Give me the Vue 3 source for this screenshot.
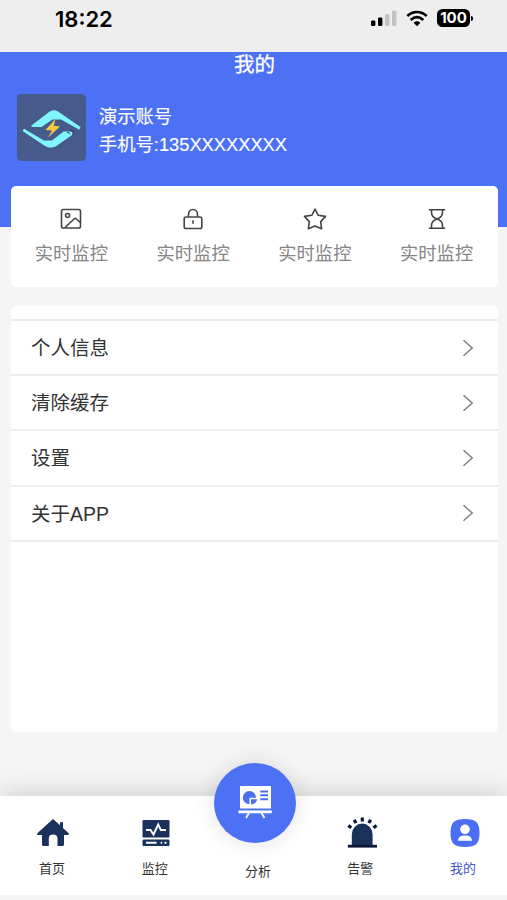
<script setup>
const shortcuts = ['image', 'lock', 'star', 'hourglass']
const rows = ['个人信息', '清除缓存', '设置', '关于APP']
const tabs = [
  { id: 'home', label: '首页' },
  { id: 'monitor', label: '监控' },
  { id: 'analysis', label: '分析' },
  { id: 'alarm', label: '告警' },
  { id: 'mine', label: '我的' },
]
</script>

<template>
  <div class="screen">
    <div class="status">
      <span class="time">18:22</span>
      <svg class="signal" width="26" height="17" viewBox="0 0 26 17">
        <rect x="0" y="10.5" width="4.4" height="5.5" rx="1.3" fill="#000" />
        <rect x="7" y="7.5" width="4.4" height="8.5" rx="1.3" fill="#000" />
        <rect x="14" y="4" width="4.4" height="12" rx="1.3" fill="#c3c3c3" />
        <rect x="21" y="0.5" width="4.4" height="15.5" rx="1.3" fill="#c3c3c3" />
      </svg>
      <svg class="wifi" width="22" height="17" viewBox="0 0 22 17">
        <path d="M1.300 6C7 .6 15 .6 20.700 6M4.700 9.900C8.600 6.500 13.400 6.500 17.300 9.900" fill="none" stroke="#000" stroke-width="2.600" />
        <path d="M11 16.200L7.600 12.700Q11 10 14.400 12.700Z" fill="#000" />
      </svg>
      <div class="battery">100</div>
      <i class="battery-tip"></i>
    </div>

    <header class="header">
      <h1 class="title">我的</h1>
      <div class="profile">
        <svg class="avatar" width="69" height="67" viewBox="0 0 69 67">
          <rect width="69" height="67" rx="4.500" fill="#465a8c" />
          <path d="M14.500 31.500L32 18Q36 15 41 17.500L63.500 33L62.300 35.800L44 25.500H35.500L24.500 33H16Q13.500 32.500 14.500 31.500Z" fill="#80f5fb" />
          <path d="M5.500 37L7 34.700L27 46.500H35L46.500 37.500H53.500Q57 39 54.500 41.500L38.500 52.500Q33 55 28 52Z" fill="#80f5fb" />
          <path d="M38.500 25L28.500 36L35 36.400L31 43.500L43 32.500L36.800 31.700Z" fill="#f6ca3c" />
          <path d="M50 38L54 40M52.500 36.500L57 37.500M55.500 41L57 39" stroke="#263f65" stroke-width="1" />
          <path d="M53 38.500L54.500 39" stroke="#c6f8ff" stroke-width="1.500" />
        </svg>
        <div class="who">
          <div>演示账号</div>
          <div>手机号:135XXXXXXXX</div>
        </div>
      </div>
    </header>

    <section class="shortcuts">
      <div v-for="s in shortcuts" :key="s" class="shortcut">
        <svg width="24" height="24" viewBox="0 0 24 24" class="line-icon">
          <template v-if="s === 'image'">
            <rect x="2.500" y="2.500" width="19" height="18.500" rx="1.800" />
            <circle cx="8.600" cy="8.500" r="2" />
            <path d="M6 20.500L15.600 11.500Q16.200 11 16.900 11.500L21.300 15.500" />
          </template>
          <template v-else-if="s === 'lock'">
            <rect x="3.200" y="10" width="17.600" height="11.500" rx="1.800" />
            <path d="M7.500 9.800V7.200a4.500 4.700 0 0 1 9 0V9.800M12 13.300V16.700" />
          </template>
          <path
            v-else-if="s === 'star'"
            d="M12 2.200L15.200 8.300L22.500 9.400L17.700 14.600L18.600 21.700L12 18.900L5.400 21.700L6.300 14.600L1.500 9.400L8.800 8.300Z"
          />
          <path
            v-else
            d="M3.800 2.800H20.200M3.800 21.300H20.200M6.500 3V5.500C6.500 9 9 11 12 12C15 11 17.500 9 17.500 5.500V3M6.500 21V18.500C6.500 15 9 13 12 12C15 13 17.500 15 17.500 18.500V21"
          />
        </svg>
        <span>实时监控</span>
      </div>
    </section>

    <section class="list">
      <div v-for="r in rows" :key="r" class="row">
        <span>{{ r }}</span>
        <svg width="12" height="18" viewBox="0 0 12 18">
          <path d="M1.500 1.200L10.200 9L1.500 16.800" fill="none" stroke="#808080" stroke-width="1.500" />
        </svg>
      </div>
    </section>

    <nav class="tabbar">
      <div v-for="t in tabs" :key="t.id" class="tab" :class="t.id">
        <div v-if="t.id === 'analysis'" class="fab">
          <svg width="34" height="34" viewBox="0 0 34 34">
            <path d="M2 1H33V23.500H2ZM.5 25.500H33.800V28.300H.5Z" fill="#fff" />
            <path d="M11 28L8 33M23.500 28L26.500 33" stroke="#fff" stroke-width="1.800" />
            <path d="M11.500 12.700V19.200A6.600 6.600 0 1 1 18 12.700Z" fill="#4b6ff2" />
            <path d="M13 14.200H19.200A6 6 0 0 1 13 19.500Z" fill="#4b6ff2" />
            <path d="M22.300 6.500H30M22.300 10.300H30M22.300 14.200H30" stroke="#4b6ff2" stroke-width="1.900" />
          </svg>
        </div>
        <svg v-else-if="t.id === 'home'" class="icon" width="32" height="32" viewBox="0 0 32 32">
          <path d="M16 2L23 8.200V5.200H26V11L31.700 16.200V18H27V27.500Q27 29 25.500 29H20.500V21.500Q20.500 17.500 16 17.500Q11.800 17.500 11.800 21.500V29H6.500Q5 29 5 27.500V18H.3V16.200Z" fill="#1a315c" />
        </svg>
        <svg v-else-if="t.id === 'monitor'" class="icon" width="32" height="32" viewBox="0 0 32 32">
          <rect x="2.500" y="3" width="27" height="17.500" rx="1.300" fill="#1a315c" />
          <rect x="2.500" y="22.500" width="27" height="6.500" rx="1.300" fill="#1a315c" />
          <path d="M6 13H10.500L13.500 17.500L18.200 7.500L20.800 13H26" fill="none" stroke="#fff" stroke-width="1.900" />
          <path d="M6 25.800H16.500M20.700 25.800H22.200M24.500 25.800H26.500" stroke="#fff" stroke-width="1.900" />
        </svg>
        <svg v-else-if="t.id === 'alarm'" class="icon" width="32" height="32" viewBox="0 0 32 32">
          <path d="M5.800 28V17.200A10.400 10.600 0 0 1 26.600 17.200V28Z" fill="#1a315c" />
          <path d="M1.800 29.200H31" stroke="#0b1934" stroke-width="2.800" />
          <path d="M16.300 .5V4.500M8.100 2.800L10.100 6M24.700 2.800L22.700 6M2.300 8.400L5.300 10.800M30.500 8.400L27.500 10.800" stroke="#0b1934" stroke-width="3.200" />
        </svg>
        <svg v-else class="icon" width="32" height="32" viewBox="0 0 32 32">
          <path d="M16 2C27 2 30.500 5.500 30.500 16S27 30 16 30S1.500 26.500 1.500 16S5 2 16 2Z" fill="#4b6ff2" />
          <circle cx="16" cy="12.300" r="4.800" fill="#fff" />
          <path d="M9 23.700Q9 18.500 16 18.500T23 23.700Z" fill="#fff" />
        </svg>
        <span class="label">{{ t.label }}</span>
      </div>
    </nav>
  </div>
</template>

<style>
body {
  margin: 0;
  background: #f5f5f5;
}
</style>

<style scoped>
.screen {
  width: 507px;
  height: 900px;
  overflow: hidden;
  display: flex;
  flex-direction: column;
  background: #f5f5f5;
  color: #333;
  font-family: "Liberation Sans", "Noto Sans CJK SC", sans-serif;
}
.status {
  flex: none;
  height: 52px;
  box-sizing: border-box;
  padding: 9px 34px 0 55px;
  display: flex;
  align-items: flex-start;
  background: #eee;
  color: #000;
}
.time {
  flex: 1;
  font: 600 22px/20px Inter, sans-serif;
}
.signal {
  margin-top: 1px;
}
.wifi {
  margin: 1px 9px 0 9px;
}
.battery {
  width: 33px;
  height: 18px;
  border-radius: 5.500px;
  background: #000;
  color: #fff;
  text-align: center;
  font: 700 15px/18px Inter, sans-serif;
}
.battery-tip {
  width: 2px;
  height: 5px;
  margin: 7px 0 0 1px;
  border-radius: 0 2px 2px 0;
  background: #000;
}
.header {
  flex: none;
  height: 175px;
  background: #4d71f4;
  color: #fff;
}
.title {
  margin: 0;
  height: 42px;
  padding-left: 2px;
  text-align: center;
  font-size: 20.500px;
  font-weight: 400;
  line-height: 25px;
  -webkit-text-stroke: 0.3px currentColor;
}
.profile {
  display: flex;
  padding-left: 17px;
}
.avatar {
  flex: none;
}
.who {
  padding: 9px 0 0 13px;
  font-size: 18.300px;
  line-height: 28px;
  -webkit-text-stroke: 0.15px currentColor;
}
.shortcuts {
  flex: none;
  height: 101px;
  margin: -41px 9px 0 11px;
  display: flex;
  border-radius: 5px;
  background: #fff;
}
.shortcut {
  flex: 1;
  display: flex;
  flex-direction: column;
  align-items: center;
  padding: 21px 1px 0 0;
  font-size: 18.300px;
  line-height: 26px;
}
.shortcut span {
  margin-top: 10px;
  color: #868686;
}
.shortcut svg {
  flex: none;
}
.line-icon {
  fill: none;
  stroke: #444;
  stroke-width: 1.600;
  stroke-linejoin: round;
}
.list {
  flex: none;
  height: 413px;
  box-sizing: border-box;
  height: 426px;
  margin: 19px 9px 0 11px;
  padding-top: 13px;
  border-radius: 5px;
  background: #fff;
}
.row {
  height: 55.200px;
  box-sizing: border-box;
  padding: 0 24px 0 20px;
  display: flex;
  align-items: center;
  justify-content: space-between;
  border-top: 2px solid #ececec;
  font-size: 19.500px;
}
.row span {
  margin-top: -2px;
}
.row:last-child {
  height: 57.200px;
  border-bottom: 2px solid #ececec;
}
.tabbar {
  flex: none;
  height: 99px;
  margin-top: 64px;
  display: flex;
  background: #fff;
  box-shadow: 0 -2px 26px rgba(0, 0, 0, 0.16);
  clip-path: inset(-60px 0 0 0);
}
.tab {
  flex: 0 0 102.800px;
  box-sizing: border-box;
  display: flex;
  flex-direction: column;
  align-items: center;
  padding: 21px 0 0 4px;
}
.icon {
  flex: none;
}
.label {
  margin: 10px 3px 0 0;
  font-size: 13px;
  line-height: 20px;
}
.fab {
  flex: none;
  width: 82px;
  height: 80px;
  margin: -54px 8px 0 0;
  display: flex;
  align-items: center;
  justify-content: center;
  border-radius: 50%;
  background: #4d71f4;
  box-shadow: 0 0 22px rgba(0, 0, 0, 0.12);
}
.fab svg {
  margin-bottom: 3px;
}
.analysis .label {
  margin: 19px 2px 0 0;
}
.mine .label {
  color: #4556c8;
}
</style>
